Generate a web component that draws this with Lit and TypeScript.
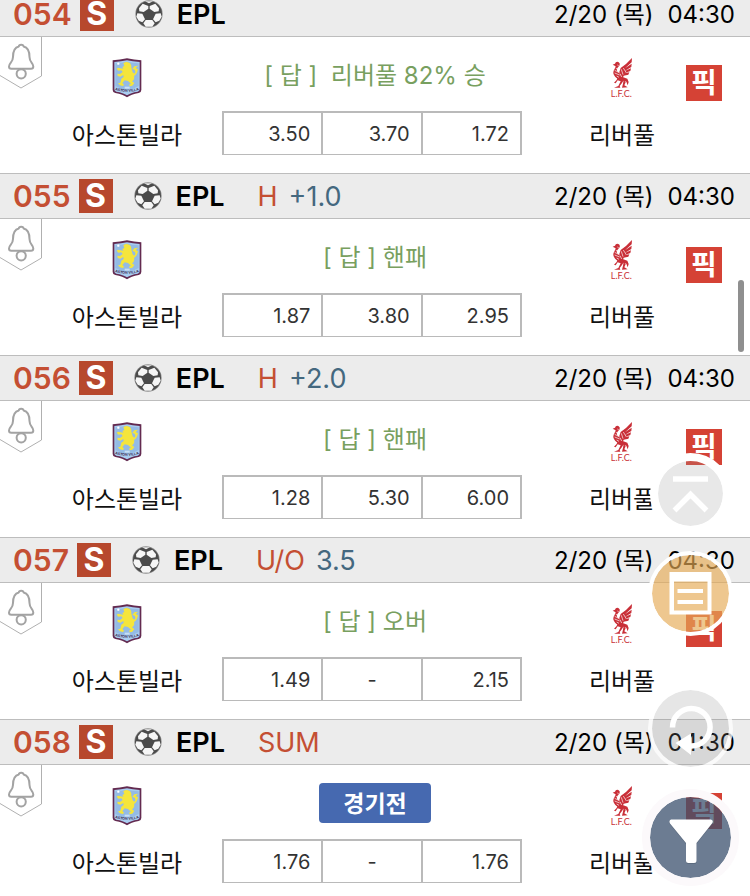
import { LitElement, html, css } from "lit";
import { customElement, property } from "lit/decorators.js";

interface Match {
  no: string;
  kind?: string;
  line?: string;
  answer?: string;
  odds: string[];
}

const MATCHES: Match[] = [
  { no: "054", answer: "[ 답 ]  리버풀 82% 승", odds: ["3.50", "3.70", "1.72"] },
  { no: "055", kind: "H", line: "+1.0", answer: "[ 답 ] 핸패", odds: ["1.87", "3.80", "2.95"] },
  { no: "056", kind: "H", line: "+2.0", answer: "[ 답 ] 핸패", odds: ["1.28", "5.30", "6.00"] },
  { no: "057", kind: "U/O", line: "3.5", answer: "[ 답 ] 오버", odds: ["1.49", "-", "2.15"] },
  { no: "058", kind: "SUM", odds: ["1.76", "-", "1.76"] },
];

const football = html`<svg class="ball" viewBox="0 0 84 84" aria-hidden="true">
  <circle cx="42" cy="42" r="41" fill="#8d8d8d" />
  <circle cx="42" cy="42" r="39" fill="#4b4b4b" />
  <g fill="#f6f6f6">
    <path d="M23 11 L40 18 L40 26 L26 36 L13 34 L12 25 Z" />
    <path d="M61 11 L44 18 L44 26 L58 36 L71 34 L72 25 Z" />
    <path d="M7 40 L22 41 L30 58 L22 67 L11 62 L4 50 Z" />
    <path d="M77 40 L62 41 L54 58 L62 67 L73 62 L80 50 Z" />
    <path d="M32 60 L52 60 L59 70 L52 80 L32 80 L25 70 Z" />
    <path d="M30 4 L54 4 L42 10 Z" />
  </g>
</svg>`;

const bell = html`<svg class="bell-art" viewBox="0 0 42 52" aria-hidden="true">
  <path d="M41.5 0 V39 L21 51 L0 38.5" fill="none" stroke="#b0b0b0" stroke-width="1" />
  <g fill="none" stroke="#a3a3a3" stroke-width="2" stroke-linejoin="round">
    <path d="M9 29.500 C9 26 13 25.500 13 20 C13 13.500 14.500 10.500 18.800 9.500 C19 7 23.400 7 23.600 9.500 C28 10.500 29.500 13.500 29.500 20 C29.500 25.500 33.300 26 33.300 29.500 Q33.300 31.700 31 31.700 H11.300 Q9 31.700 9 29.500 Z" />
    <circle cx="21.200" cy="36.800" r="4.600" />
  </g>
</svg>`;

const villa = html`<svg class="villa" viewBox="0 0 90 120" role="img" aria-label="Aston Villa">
  <path d="M2 7 Q24 5 45 1 Q66 5 88 7 V96 Q88 103 80 105 Q57 109 45 118 Q33 109 10 105 Q2 103 2 96 Z" fill="#632a50" />
  <path d="M7 12 Q28 10 45 7 Q62 10 83 12 V94 Q83 99 77 101 Q56 104 45 112 Q34 104 13 101 Q7 99 7 94 Z" fill="#a9cdf0" />
  <path d="M10 16 Q30 14 45 11 Q60 14 80 16 V84 Q62 95 45 96 Q28 95 10 84 Z" fill="#94bbe5" />
  <circle cx="19" cy="17" r="3.500" fill="#fff" />
  <path d="M34 16 Q42 9 52 14 Q59 18 58 29 L62 43 L67 47 Q73 41 68 35 L61 33 L67 25 L78 23 L71 30 L78 34 Q75 49 66 54 Q69 64 60 70 L67 75 L61 83 L53 85 L51 80 L57 77 L48 69 L38 67 L31 75 L36 80 L33 84 L24 82 L18 76 L25 74 L28 62 L35 57 L34 51 L25 56 L17 54 L16 47 L24 48 L32 42 L28 37 L19 38 L14 32 L18 29 L25 31 L34 32 L31 27 L37 24 Z" fill="#f5e53c" />
  <path d="M38 86 H53 V92 H38 Z" fill="#c8dff4" />
  <path id="villa-arc" d="M10 96 Q45 107 80 96" fill="none" />
  <text class="villa-name" text-anchor="middle"><textPath href="#villa-arc" startOffset="50%">ASTON VILLA</textPath></text>
</svg>`;

const lfc = html`<svg class="lfc" viewBox="0 0 72 120" role="img" aria-label="Liverpool FC">
  <g fill="#c92f38">
    <path d="M8 20 L15 17 Q17 10 25 12 Q31 14 29 22 Q25 27 22 30 Q18 36 23 42 L36 50 L30 63 Q18 63 12 51 Q7 43 14 32 L17 25 Z" />
    <path d="M28 42 L32 30 Q48 20 66 0 L65 13 L45 31 L65 17 L64 27 L44 39 L63 31 L61 39 L43 46 L58 43 L55 50 L41 53 Q38 64 30 64 L29 52 Z" />
    <path d="M22 60 L38 57 L52 62 L56 72 L53 82 L49 71 L40 68 L36 75 L29 84 L31 89 H12 L25 84 L32 70 L23 67 L17 76 L12 74 L20 66 Z" />
    <path d="M41 65 L47 73 L43 82 L53 88 L36 89 L39 77 Z" />
  </g>
  <path d="M17 30 L27 37 M14 37 L26 43 M14 45 L29 51 M22 21 L26 23 M34 34 L39 50 M40 30 L48 43 M30 47 L35 57 M20 54 L27 58" stroke="#fff" stroke-width="2" fill="none" />
  <text class="lfc-name" x="34" y="116" text-anchor="middle">L.F.C.</text>
</svg>`;

@customElement("match-row")
class MatchRow extends LitElement {
  @property({ attribute: false }) match!: Match;

  static styles = css`
    :host { display: block; }
    .head {
      display: flex; align-items: center; box-sizing: border-box; height: 46px;
      padding: 0 15px 0 13px; background: #ececec;
      border-top: 1px solid #bdbdbd; border-bottom: 1px solid #bdbdbd;
      line-height: 36px; white-space: nowrap;
    }
    .no { font-size: 30px; font-weight: 600; color: #c44f33; }
    .sport {
      width: 34px; height: 34px; margin-left: 8px; background: #b7482d; color: #fff;
      font-size: 32px; font-weight: 700; line-height: 34px; text-align: center;
    }
    .ball { width: 28px; height: 28px; margin: 0 14px 0 21px; }
    .league { font-size: 27px; font-weight: 600; width: 82px; }
    .kind { font-size: 27px; color: #c44f33; }
    .line { font-size: 27px; color: #44687f; margin-left: 11px; }
    .league, .kind, .line, .when { padding-top: 2px; }
    .when { margin-left: auto; display: flex; gap: 14px; font-size: 24px; }
    .body {
      display: grid; grid-template-columns: 42px 170fr 346px 128fr 36px;
      height: 136px; padding-right: 28px; align-items: start;
    }
    button { font: inherit; border: 0; padding: 0; background: none; cursor: pointer; }
    .bell, .bell-art { display: block; width: 42px; height: 52px; }
    .team { display: flex; flex-direction: column; align-items: center; padding-top: 21px; gap: 20px; }
    .name { font-size: 24px; line-height: 36px; color: #111; white-space: nowrap; }
    .villa { width: 30px; height: 40px; }
    .lfc { width: 24px; height: 40px; }
    .villa-name { font-family: "Liberation Sans", sans-serif; font-size: 11px; font-weight: 700; fill: #3a2748; }
    .lfc-name { font-family: Lato, sans-serif; font-size: 27px; fill: #c92f38; }
    .center { padding: 18px 36px 0 10px; }
    .answer {
      display: flex; justify-content: center; height: 40px; line-height: 42px;
      padding-left: 6px; font-size: 24px; color: #78a05f; white-space: pre;
    }
    .soon {
      width: 112px; height: 40px; border-radius: 4px; background: #4669b0; color: #fff;
      font-size: 23px; font-weight: 700;
    }
    .odds { width: 100%; margin-top: 16px; border-collapse: separate; border-spacing: 0; table-layout: fixed; border-right: 2px solid #bababa; }
    .odds td {
      height: 41px; padding: 0 11px; border: solid #bababa; border-width: 2px 0 1px 2px;
      font-size: 20px; line-height: 24px; text-align: right; color: #333;
    }
    .odds .none { text-align: center; }
    .pick { width: 36px; height: 36px; margin-top: 28px; background: #d54235; color: #fff; font-size: 28px; font-weight: 700; line-height: 34px; }
  `;

  render() {
    const m = this.match;
    return html`
      <div class="head">
        <span class="no">${m.no}</span><span class="sport">S</span>${football}
        <span class="league">EPL</span>
        ${m.kind ? html`<span class="kind">${m.kind}</span>` : ""}
        ${m.line ? html`<span class="line">${m.line}</span>` : ""}
        <span class="when"><span>2/20 (목)</span><span>04:30</span></span>
      </div>
      <div class="body">
        <button class="bell" aria-label="알림">${bell}</button>
        <div class="team">${villa}<span class="name">아스톤빌라</span></div>
        <div class="center">
          <div class="answer">${m.answer ? m.answer : html`<button class="soon">경기전</button>`}</div>
          <table class="odds"><tbody><tr>
            ${m.odds.map((o) => html`<td class=${o === "-" ? "none" : "odd"}>${o}</td>`)}
          </tr></tbody></table>
        </div>
        <div class="team">${lfc}<span class="name">리버풀</span></div>
        <button class="pick">픽</button>
      </div>`;
  }
}

@customElement("app-root")
class AppRoot extends LitElement {
  static styles = css`
    :host {
      display: block; position: relative; height: 100vh; overflow: hidden; background: #fff;
      color: #000; font-family: Inter, "Noto Sans CJK KR", sans-serif;
    }
    .list { margin-top: -9px; }
    .thumb { position: absolute; right: 6px; top: 280px; width: 6px; height: 72px; border-radius: 3px; background: #8f8f8f; }
    .tools { position: absolute; right: 11px; bottom: 10px; display: flex; flex-direction: column; align-items: center; }
    .tool { display: block; box-sizing: border-box; padding: 0; border-style: solid; border-radius: 50%; background-clip: padding-box; cursor: pointer; }
    .tool svg { display: block; width: 100%; height: 100%; }
    .up { width: 81px; height: 81px; border: 8px solid #fff; background-color: rgba(150, 150, 150, 0.22); margin-bottom: 17px; }
    .memo { width: 85px; height: 85px; border: 4px solid #fff; background-color: rgba(229, 170, 85, 0.66); margin-bottom: 50px; }
    .reload { width: 85px; height: 85px; border: 4px solid rgba(255, 255, 255, 0.75); background-color: rgba(141, 141, 141, 0.22); margin-bottom: 18px; }
    .filter { width: 97px; height: 97px; border: 8px solid #fcf9fb; background-color: rgba(57, 78, 108, 0.74); }
  `;

  render() {
    return html`
      <main class="list">${MATCHES.map((m) => html`<match-row .match=${m}></match-row>`)}</main>
      <div class="thumb"></div>
      <nav class="tools">
        <button class="tool up" aria-label="맨 위로"><svg viewBox="0 0 65 65">
          <path d="M15 18 H50" stroke="#fff" stroke-width="5.500" />
          <path d="M16.500 49.500 L32.500 33.500 L48.500 49.500" fill="none" stroke="#fff" stroke-width="5.500" />
        </svg></button>
        <button class="tool memo" aria-label="메모"><svg viewBox="0 0 77 77">
          <path fill="#fff" fill-rule="evenodd" d="M17.500 17 H59.500 V59.500 H17.500 Z M22 26.500 V55.500 H55.500 V26.500 Z" />
          <path d="M25.500 36 H51 M25.500 47 H51" stroke="#fff" stroke-width="4" />
        </svg></button>
        <button class="tool reload" aria-label="새로고침"><svg viewBox="0 0 77 77">
          <path d="M20.500 37.500 A18.800 18.800 0 1 1 39 56" fill="none" stroke="#fff" stroke-width="5.500" />
          <path d="M23.500 53 L39 43.500 V65 Z" fill="#fff" />
        </svg></button>
        <button class="tool filter" aria-label="필터"><svg viewBox="0 0 81 81">
          <path transform="translate(0 1)" fill="#4c5a6c" opacity="0.5" d="M21 22.500 H61 Q64 23.500 62 26.500 L46.500 46 V63.500 Q46.500 66 44 66 H38.500 Q36 66 36 63.500 V46 L20 26.500 Q18.500 23.500 21 22.500 Z" />
          <path fill="#fff" d="M21 22.500 H61 Q64 23.500 62 26.500 L46.500 46 V63.500 Q46.500 66 44 66 H38.500 Q36 66 36 63.500 V46 L20 26.500 Q18.500 23.500 21 22.500 Z" />
        </svg></button>
      </nav>`;
  }
}
